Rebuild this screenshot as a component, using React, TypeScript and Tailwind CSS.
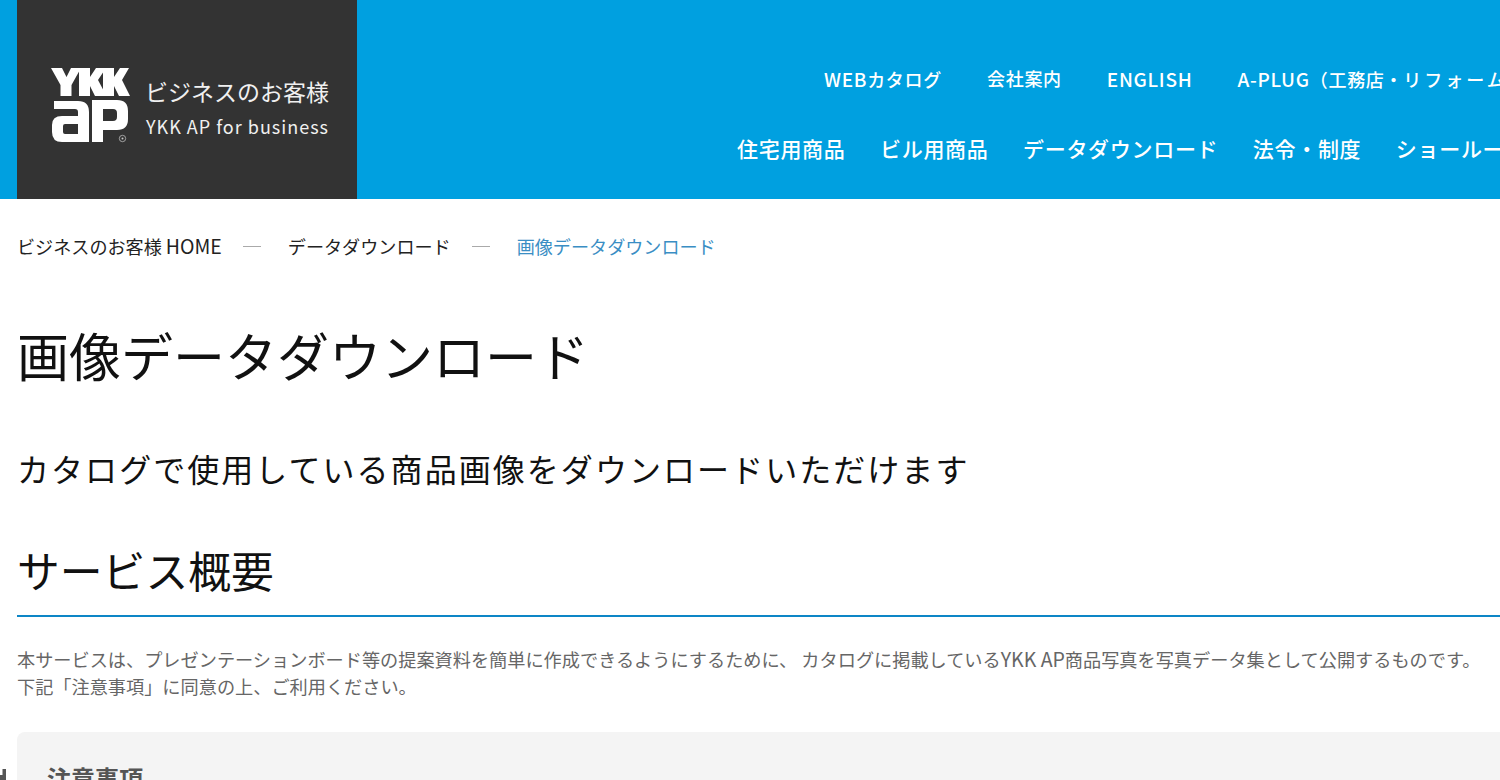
const jp = "font-['Noto_Sans_CJK_JP','Noto_Sans',sans-serif]";

function Logo() {
  return (
    <svg width="80" height="76" viewBox="0 0 80 76" className="shrink-0" aria-label="YKK AP">
      <g fill="#fff">
        <polygon points="0,0 11,0 15.5,9 20,0 30,0 20.5,17 20.5,28 9.5,28 9.5,17" />
        <polygon points="28,0 39,0 39,9 45,0 55,0 47,12 55.5,28 44,28 39,18 39,28 28,28" />
        <polygon points="52,0 63,0 63,9 69,0 78,0 71,12 79,28 68,28 63,18 63,28 52,28" />
        <path fillRule="evenodd" d="M3 33H27Q38 33 38 44V74H11Q1 74 1 64V57Q1 48 11 48H27V44Q27 41 24 41H3ZM14 56Q12 56 12 58V64Q12 66 14 66H27V56Z" />
        <path fillRule="evenodd" d="M41 32H66Q77 32 77 43V51Q77 62 66 62H52V74H41ZM52 41V53H62Q66 53 66 49V45Q66 41 62 41Z" />
      </g>
      <circle cx="71.5" cy="70.5" r="3.2" fill="none" stroke="#cccccc" strokeWidth="0.7" />
      <circle cx="71.5" cy="70.5" r="1" fill="#cccccc" />
    </svg>
  );
}

export default function App() {
  return (
    <div className={`relative h-[780px] w-[1500px] overflow-hidden bg-white ${jp}`}>
      <header className="flex h-[199px] bg-[#00a0e0] pl-[17px] text-white">
        <div className="flex h-full w-[340px] shrink-0 items-center bg-[#333333] pl-[34px]">
          <div className="mt-[13px]">
            <Logo />
          </div>
          <div className="ml-[14px] mt-[13px] flex flex-col gap-[7px] whitespace-nowrap text-[#f0f0f0]">
            <span className="text-[23px] leading-[32px]">ビジネスのお客様</span>
            <span className="ml-[1px] text-[18px] leading-[24px] tracking-[1px]">YKK AP for business</span>
          </div>
        </div>
        <nav className="flex min-w-0 flex-1 flex-col whitespace-nowrap">
          <ul className="ml-[467px] mt-[65px] flex gap-[45px] text-[18px] font-medium leading-[27px] tracking-[0.7px]">
            <li><span className="text-[19px]">WEB</span>カタログ</li>
            <li>会社案内</li>
            <li className="text-[19px]">ENGLISH</li>
            <li><span className="text-[19px]">A-PLUG</span>（工務店・<span className="tracking-[3px]">リフォーム</span>店様向け）</li>
          </ul>
          <ul className="ml-[380px] mt-[39px] flex gap-[34.5px] text-[21px] font-medium leading-[32px] tracking-[0.7px]">
            <li>住宅用商品</li>
            <li>ビル用商品</li>
            <li>データダウンロード</li>
            <li>法令・制度</li>
            <li>ショールーム</li>
          </ul>
        </nav>
      </header>

      <main className="pl-[17px]">
        <ol className="mt-[34px] flex items-center whitespace-nowrap text-[18.1px] leading-[26px] text-[#222222]">
          <li>ビジネスのお客様 <span className="text-[19.5px]">HOME</span></li>
          <li className="ml-[21px] mr-[27px] h-px w-[18px] bg-[#aaaaaa]" />
          <li>データダウンロード</li>
          <li className="ml-[21px] mr-[27px] h-px w-[18px] bg-[#aaaaaa]" />
          <li className="text-[#3a8ec4]">画像データダウンロード</li>
        </ol>

        <h1 className="mt-[60px] whitespace-nowrap text-[52px] leading-[72px] text-[#111111]">画像データダウンロード</h1>
        <p className="mt-[53px] whitespace-nowrap text-[32px] leading-[48px] tracking-[2.05px] text-[#111111]">
          カタログで使用している商品画像をダウンロードいただけます
        </p>
        <h2 className="mt-[47px] whitespace-nowrap border-b-2 border-[#0d86c6] pb-[16px] text-[42.8px] leading-[60px] text-[#111111]">
          サービス概要
        </h2>
        <p className="mt-[28px] whitespace-nowrap text-[18.18px] leading-[27px] text-[#666666]">
          本サービスは、プレゼンテーションボード等の提案資料を簡単に作成できるようにするために、 カタログに掲載している<span className="text-[19.5px]">YKK AP</span>商品写真を写真データ集として公開するものです。
          <br />
          下記「注意事項」に同意の上、ご利用ください。
        </p>
        <section className="mt-[32px] h-[100px] rounded-tl-[8px] bg-[#f4f4f4] pl-[30px] pt-[31px]">
          <h3 className="text-[24px] font-bold leading-[30px] text-[#555555]">注意事項</h3>
        </section>
      </main>
      <svg className="absolute bottom-0 left-0" width="7" height="12" viewBox="0 0 7 12" aria-hidden="true">
        <path d="M2.5 1H6V12H0V7H2.5Z" fill="#555555" />
      </svg>
    </div>
  );
}
